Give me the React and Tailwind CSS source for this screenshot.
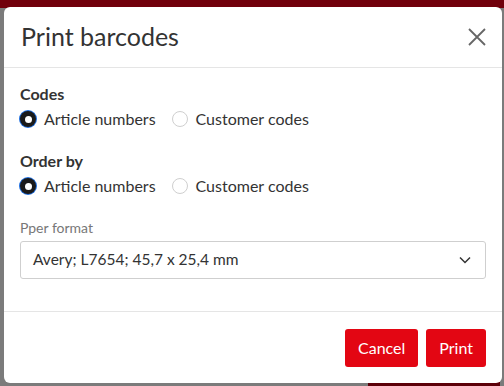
import React from 'react';

function Radio({ checked, label }) {
  return (
    <label className="flex items-center gap-2 text-[16px] text-[#333]">
      {checked ? (
        <span className="flex h-4 w-4 items-center justify-center rounded-full bg-[#1a1a1a] shadow-[0_0_0_1px_#1f6fe0]">
          <span className="h-[7px] w-[7px] rounded-full bg-white" />
        </span>
      ) : (
        <span className="h-4 w-4 rounded-full border border-[#cfcfcf] bg-white" />
      )}
      <span>{label}</span>
    </label>
  );
}

function RadioGroup({ title }) {
  return (
    <div>
      <div className="text-[16px] font-bold leading-5 text-[#333]">{title}</div>
      <div className="mt-[3px] flex items-center gap-[16px]">
        <Radio checked label="Article numbers" />
        <Radio label="Customer codes" />
      </div>
    </div>
  );
}

export default function App() {
  return (
    <div className="relative h-[386px] w-[504px] overflow-hidden bg-[#7b7b7b] font-['Lato','Noto_Sans',sans-serif]">
      <div className="absolute inset-x-0 top-0 h-[8px] bg-[#71000b]" />
      <div className="absolute bottom-0 right-[4px] h-[10px] w-[132px] bg-[#5c0009]" />

      <div className="relative ml-[4px] mt-[7px] flex h-[376px] w-[498px] flex-col rounded-[6px] bg-white">
        <div className="flex h-[61px] items-center justify-between border-b border-[#e5e5e5] pl-[17px] pr-[16px]">
          <h3 className="text-[25px] font-normal text-[#333]">Print barcodes</h3>
          <svg width="18" height="18" viewBox="0 0 18 18" className="text-[#666]">
            <path d="M1 1 L17 17 M17 1 L1 17" stroke="currentColor" strokeWidth="1.8" fill="none" />
          </svg>
        </div>

        <div className="flex flex-1 flex-col px-[16px] pt-[16px]">
          <RadioGroup title="Codes" />
          <div className="mt-[20px]">
            <RadioGroup title="Order by" />
          </div>

          <div className="mt-[22px] text-[14px] leading-4 text-[#777]">Pper format</div>
          <div className="mt-[5px] flex h-[38px] items-center justify-between rounded-[3px] border border-[#cfcfcf] pl-[12px] pr-[14px] text-[15.5px] text-[#333]">
            <span>Avery; L7654; 45,7 x 25,4 mm</span>
            <svg width="12" height="8" viewBox="0 0 12 8">
              <path d="M1 1.5 L6 6.5 L11 1.5" stroke="#333" strokeWidth="1.5" fill="none" />
            </svg>
          </div>
        </div>

        <div className="flex h-[72px] items-center justify-end gap-2 border-t border-[#e5e5e5] pr-[16px]">
          <button type="button" className="h-[38px] rounded-[3px] bg-[#e30613] px-[13px] text-[16px] text-white">
            Cancel
          </button>
          <button type="button" className="h-[38px] rounded-[3px] bg-[#e30613] px-[13px] text-[16px] text-white">
            Print
          </button>
        </div>
      </div>
    </div>
  );
}
